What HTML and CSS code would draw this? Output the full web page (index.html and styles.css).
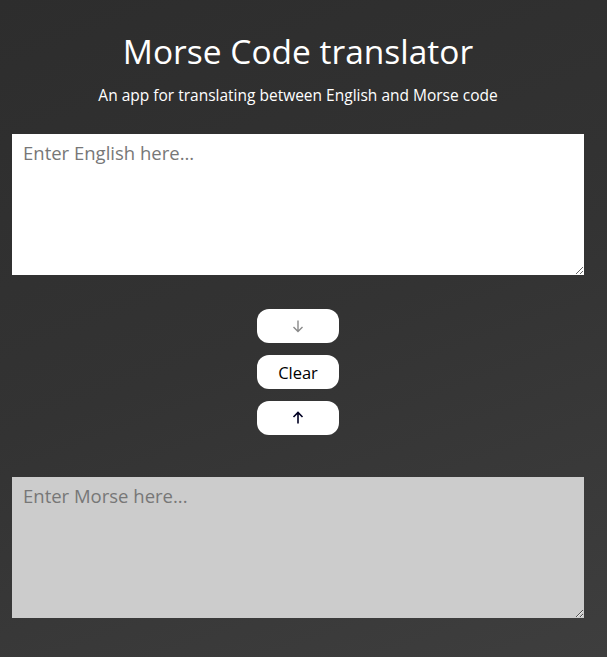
FILE: index.html
```html
<!DOCTYPE html>
<html lang="en">
<head>
<meta charset="utf-8">
<title>Morse Code translator</title>
<link rel="stylesheet" href="styles.css">
</head>
<body>
<main class="app">
  <header class="header">
    <h1 class="title">Morse Code translator</h1>
    <p class="subtitle">An app for translating between English and Morse code</p>
  </header>
  <textarea class="box box-english" placeholder="Enter English here..."></textarea>
  <div class="controls">
    <button class="btn btn-disabled" aria-label="To Morse">
      <svg class="arrow" width="14" height="14" viewBox="0 0 14 14"><path d="M7 1.5V12.5M2.5 8L7 12.5L11.5 8" fill="none" stroke="currentColor" stroke-width="1.4"/></svg>
    </button>
    <button class="btn">Clear</button>
    <button class="btn btn-up" aria-label="To English">
      <svg class="arrow" width="14" height="14" viewBox="0 0 14 14"><path d="M7 12.5V1.5M2.5 6L7 1.5L11.5 6" fill="none" stroke="currentColor" stroke-width="1.6"/></svg>
    </button>
  </div>
  <textarea class="box box-morse" placeholder="Enter Morse here..."></textarea>
</main>
</body>
</html>
```
FILE: styles.css
```css
html, body {
  margin: 0;
  padding: 0;
  min-height: 100%;
}
body {
  background: linear-gradient(160deg, #2d2d2d 0%, #333333 50%, #3e3e3e 100%);
  min-height: 657px;
  font-family: "Open Sans", "DejaVu Sans", sans-serif;
  color: #ffffff;
}
.app {
  padding: 0 12px;
  display: flex;
  flex-direction: column;
}
.header {
  text-align: center;
  width: 572px;
  padding-top: 31px;
}
.title {
  margin: 0;
  font-size: 33.5px;
  font-weight: 500;
  line-height: 40px;
}
.subtitle {
  margin: 14px 0 0;
  font-size: 15.5px;
  line-height: 20px;
}
.box {
  display: block;
  width: 572px;
  height: 141px;
  box-sizing: border-box;
  border: none;
  padding: 6px 11px;
  font-family: inherit;
  font-size: 18.5px;
  outline: none;
  resize: vertical;
}
.box::placeholder {
  color: #777777;
}
.box-english {
  margin-top: 29px;
  background: #ffffff;
}
.box-morse {
  background: #cccccc;
}
.controls {
  width: 572px;
  display: flex;
  flex-direction: column;
  align-items: center;
  gap: 12px;
  padding: 34px 0 42px;
}
.btn {
  width: 82px;
  height: 34px;
  border: none;
  border-radius: 12px;
  background: #ffffff;
  color: #000000;
  font-family: inherit;
  font-size: 16.5px;
  cursor: pointer;
  display: flex;
  align-items: center;
  justify-content: center;
  padding: 0;
}
.arrow {
  display: block;
}
.btn-disabled {
  color: #8a8a8a;
}
.btn-up {
  color: #000022;
}
```
